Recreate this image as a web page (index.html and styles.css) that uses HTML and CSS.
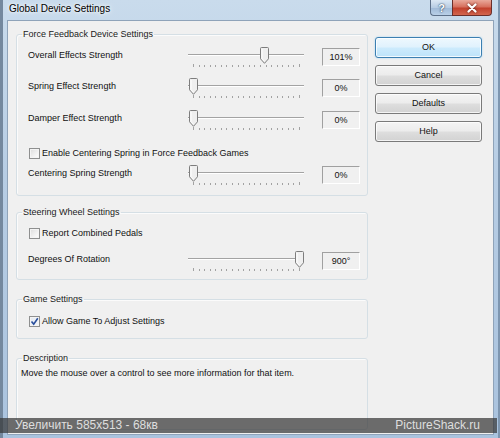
FILE: index.html
```html
<!DOCTYPE html>
<html>
<head>
<meta charset="utf-8">
<title>Global Device Settings</title>
<link rel="stylesheet" href="styles.css">
</head>
<body>
<div class="window">
  <div class="titlebar">
    <span class="title">Global Device Settings</span>
    <div class="caps">
      <span class="cap cap-help">?</span>
      <span class="cap cap-close"><svg width="12" height="10" viewBox="0 0 12 10"><path d="M2.5 1.5l7 7M9.5 1.5l-7 7" stroke="#fff" stroke-width="2.2" stroke-linecap="round"/></svg></span>
    </div>
  </div>
  <div class="client">
    <div class="groups">
      <fieldset class="group g-ff">
        <legend>Force Feedback Device Settings</legend>
        <div class="srow r-first">
          <span class="slabel">Overall Effects Strength</span>
          <div class="slider">
            <div class="track"></div>
            <div class="ticks"><i></i><i></i><i></i><i></i><i></i><i></i><i></i><i></i><i></i><i></i><i></i><i></i><i></i><i></i><i></i><i></i><i></i><i></i><i></i><i></i></div>
            <svg class="thumb" style="left:72px" width="9" height="17" viewBox="0 0 9 17"><path d="M1.5 .5h6a1 1 0 0 1 1 1v10.3l-4 4.5-4-4.5V1.5a1 1 0 0 1 1-1z" fill="#efefef" stroke="#7d7d7d"/><path d="M2 2v9.6l2.5 2.8" fill="none" stroke="#fff"/></svg>
          </div>
          <span class="value">101%</span>
        </div>
        <div class="srow r-2">
          <span class="slabel">Spring Effect Strength</span>
          <div class="slider">
            <div class="track"></div>
            <div class="ticks"><i></i><i></i><i></i><i></i><i></i><i></i><i></i><i></i><i></i><i></i><i></i><i></i><i></i><i></i><i></i><i></i><i></i><i></i><i></i><i></i></div>
            <svg class="thumb" style="left:1px" width="9" height="17" viewBox="0 0 9 17"><path d="M1.5 .5h6a1 1 0 0 1 1 1v10.3l-4 4.5-4-4.5V1.5a1 1 0 0 1 1-1z" fill="#efefef" stroke="#7d7d7d"/><path d="M2 2v9.6l2.5 2.8" fill="none" stroke="#fff"/></svg>
          </div>
          <span class="value">0%</span>
        </div>
        <div class="srow r-3">
          <span class="slabel">Damper Effect Strength</span>
          <div class="slider">
            <div class="track"></div>
            <div class="ticks"><i></i><i></i><i></i><i></i><i></i><i></i><i></i><i></i><i></i><i></i><i></i><i></i><i></i><i></i><i></i><i></i><i></i><i></i><i></i><i></i></div>
            <svg class="thumb" style="left:1px" width="9" height="17" viewBox="0 0 9 17"><path d="M1.5 .5h6a1 1 0 0 1 1 1v10.3l-4 4.5-4-4.5V1.5a1 1 0 0 1 1-1z" fill="#efefef" stroke="#7d7d7d"/><path d="M2 2v9.6l2.5 2.8" fill="none" stroke="#fff"/></svg>
          </div>
          <span class="value">0%</span>
        </div>
        <label class="crow c-center">
          <span class="box"></span>
          <span>Enable Centering Spring in Force Feedback Games</span>
        </label>
        <div class="srow r-5">
          <span class="slabel">Centering Spring Strength</span>
          <div class="slider">
            <div class="track"></div>
            <div class="ticks"><i></i><i></i><i></i><i></i><i></i><i></i><i></i><i></i><i></i><i></i><i></i><i></i><i></i><i></i><i></i><i></i><i></i><i></i><i></i><i></i></div>
            <svg class="thumb" style="left:1px" width="9" height="17" viewBox="0 0 9 17"><path d="M1.5 .5h6a1 1 0 0 1 1 1v10.3l-4 4.5-4-4.5V1.5a1 1 0 0 1 1-1z" fill="#efefef" stroke="#7d7d7d"/><path d="M2 2v9.6l2.5 2.8" fill="none" stroke="#fff"/></svg>
          </div>
          <span class="value">0%</span>
        </div>
      </fieldset>

      <fieldset class="group g-wheel">
        <legend>Steering Wheel Settings</legend>
        <label class="crow c-pedals">
          <span class="box"></span>
          <span>Report Combined Pedals</span>
        </label>
        <div class="srow r-deg">
          <span class="slabel">Degrees Of Rotation</span>
          <div class="slider">
            <div class="track"></div>
            <div class="ticks"><i></i><i></i><i></i><i></i><i></i><i></i><i></i><i></i><i></i><i></i><i></i><i></i><i></i><i></i><i></i><i></i><i></i><i></i><i></i><i></i></div>
            <svg class="thumb" style="left:107px" width="9" height="17" viewBox="0 0 9 17"><path d="M1.5 .5h6a1 1 0 0 1 1 1v10.3l-4 4.5-4-4.5V1.5a1 1 0 0 1 1-1z" fill="#efefef" stroke="#7d7d7d"/><path d="M2 2v9.6l2.5 2.8" fill="none" stroke="#fff"/></svg>
          </div>
          <span class="value">900°</span>
        </div>
      </fieldset>

      <fieldset class="group g-game">
        <legend>Game Settings</legend>
        <label class="crow c-game">
          <span class="box checked"><svg width="9" height="9" viewBox="0 0 9 9"><path d="M1.5 4.5l2.2 2.6L7.8 1.2" fill="none" stroke="#2a4f9c" stroke-width="1.6"/></svg></span>
          <span>Allow Game To Adjust Settings</span>
        </label>
      </fieldset>

      <fieldset class="group g-desc">
        <legend>Description</legend>
        <p class="desc">Move the mouse over a control to see more information for that item.</p>
      </fieldset>
    </div>

    <div class="buttons">
      <span class="btn btn-default">OK</span>
      <span class="btn">Cancel</span>
      <span class="btn">Defaults</span>
      <span class="btn">Help</span>
    </div>
  </div>

  <div class="watermark">
    <span>Увеличить 585x513 - 68кв</span>
    <span>PictureShack.ru</span>
  </div>
</div>
</body>
</html>
```

FILE: styles.css
```css
* { box-sizing: border-box; }

html, body {
  margin: 0;
  padding: 0;
}

body {
  width: 500px;
  height: 438px;
  overflow: hidden;
  font-family: "Liberation Sans", Arial, sans-serif;
  font-size: 9px;
  color: #111;
}

.window {
  position: relative;
  width: 500px;
  height: 438px;
  display: flex;
  flex-direction: column;
  background: linear-gradient(180deg, #c9dbec 0%, #b7cde4 40%, #aac3de 100%);
  box-shadow: inset 3px 0 #74889e, inset -2px 0 #7e96b0;
}

/* ---------- title bar ---------- */
.titlebar {
  height: 21px;
  flex: none;
  display: flex;
  justify-content: space-between;
  align-items: flex-start;
  padding-left: 9px;
}

.title {
  font-size: 10px;
  line-height: 18px;
  color: #000;
  text-shadow: 0 0 6px #fff, 0 0 3px #fff;
}

.caps {
  display: flex;
  margin-right: 8px;
}

.cap {
  height: 16px;
  display: flex;
  align-items: center;
  justify-content: center;
  border: 1px solid #5d7089;
  border-top: none;
}

.cap-help {
  width: 22px;
  border-radius: 0 0 0 4px;
  border-right: none;
  background: linear-gradient(180deg, #dce8f4 0%, #b8cde3 50%, #9fb9d6 51%, #b9d0e8 100%);
  color: #fff;
  font-weight: bold;
  font-size: 11px;
  text-shadow: 0 0 2px #2d4663, 0 0 1px #2d4663;
}

.cap-close {
  width: 40px;
  border-radius: 0 0 4px 0;
  border-color: #6b2f2a;
  background: linear-gradient(180deg, #e9a99b 0%, #d7705e 45%, #c2412d 55%, #d3664f 100%);
}

.cap-close svg {
  filter: drop-shadow(0 0 1px #5a1a12);
}

/* ---------- client area ---------- */
.client {
  flex: none;
  height: 413px;
  margin: 0 7px 0 8px;
  background: #f0f0f0;
  box-shadow: 0 0 0 1px #8fa3b9;
  display: flex;
  gap: 7px;
  padding: 7px 11px 4px 8px;
}

.groups {
  width: 352px;
  flex: none;
  display: flex;
  flex-direction: column;
}

.group {
  margin: 0;
  min-width: 0;
  padding: 0 7px 10px 5px;
  border: 1px solid #d5dfe5;
  border-radius: 3px;
  box-shadow: inset 1px 1px 0 #fbfbfb;
}

.group legend {
  padding: 0 1px;
  line-height: 12px;
  color: #1a1a1a;
}

.g-wheel { margin-top: 10px; padding-bottom: 8px; }
.g-game { margin-top: 13px; padding-bottom: 11px; }
.g-desc { margin-top: 13px; flex: 1; }

/* ---------- slider rows ---------- */
.srow {
  display: flex;
  align-items: flex-start;
  height: 20px;
  margin-left: 6px;
}

.r-first { margin-top: 7px; }
.r-2 { margin-top: 11px; }
.r-3 { margin-top: 12px; }
.r-5 { margin-top: 6px; }
.r-deg { margin-top: 12px; }

.slabel {
  width: 160px;
  flex: none;
  line-height: 16px;
  white-space: nowrap;
}

.slider {
  position: relative;
  width: 116px;
  flex: none;
  height: 20px;
  padding-top: 7px;
}

.track {
  height: 2px;
  border-top: 1px solid #a3a3a3;
  border-bottom: 1px solid #ffffff;
}

.ticks {
  display: flex;
  justify-content: space-between;
  align-items: flex-start;
  height: 3px;
  margin-top: 8px;
  padding: 0 4px 0 5px;
}

.ticks i {
  display: block;
  width: 1px;
  height: 2px;
  margin-top: 1px;
  background: #a2a2a2;
}

.ticks i:first-child,
.ticks i:last-child {
  height: 3px;
  margin-top: 0;
}

.thumb {
  position: absolute;
  top: 0;
}

.value {
  width: 38px;
  flex: none;
  margin: 1px 0 0 18px;
  height: 18px;
  line-height: 16px;
  text-align: center;
  border: 1px solid;
  border-color: #a0a0a0 #ffffff #ffffff #a0a0a0;
  white-space: nowrap;
}

/* ---------- checkbox rows ---------- */
.crow {
  display: flex;
  align-items: center;
  gap: 2px;
  height: 12px;
  margin-left: 7px;
  white-space: nowrap;
}

.c-center { margin-top: 17px; }
.c-pedals { margin-top: 9px; }
.c-game { margin-top: 10px; }

.box {
  width: 11px;
  height: 11px;
  flex: none;
  display: flex;
  align-items: center;
  justify-content: center;
  border: 1px solid #8e8f8f;
  background: linear-gradient(135deg, #dcdcdc 0%, #f2f2f2 60%, #ffffff 100%);
  box-shadow: inset 0 0 0 1px #f4f4f4;
}

.box.checked {
  background: linear-gradient(135deg, #e3e8f0 0%, #f6f8fb 100%);
}

/* ---------- description ---------- */
.desc {
  margin: 3px 0 0 -1px;
  line-height: 12px;
  white-space: nowrap;
}

/* ---------- buttons ---------- */
.buttons {
  width: 107px;
  flex: none;
  display: flex;
  flex-direction: column;
  gap: 7px;
  padding-top: 9px;
}

.btn {
  height: 21px;
  line-height: 19px;
  text-align: center;
  border: 1px solid #7a7a7a;
  border-radius: 3px;
  background: linear-gradient(180deg, #f4f4f4 0%, #ececec 48%, #dedede 52%, #d2d2d2 100%);
  box-shadow: inset 0 0 0 1px rgba(255, 255, 255, 0.75);
  color: #111;
}

.btn-default {
  border-color: #3c7fb1;
  background: linear-gradient(180deg, #eef8fe 0%, #e0f2fd 48%, #cdebfd 52%, #bde3f9 100%);
  box-shadow: inset 0 0 0 1px rgba(255, 255, 255, 0.8), 0 0 2px #9ed1f3;
}

/* ---------- watermark overlay ---------- */
.watermark {
  position: absolute;
  left: 0;
  right: 3px;
  top: 418px;
  height: 15px;
  display: flex;
  justify-content: space-between;
  align-items: center;
  padding: 0 17px 0 15px;
  background: rgba(55, 55, 55, 0.72);
  color: #dedede;
  font-family: "Liberation Sans", sans-serif;
  font-size: 12px;
  line-height: 15px;
}
```
